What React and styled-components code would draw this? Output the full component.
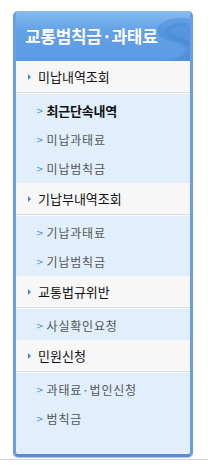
import React from "react";
import styled, { createGlobalStyle } from "styled-components";

const Global = createGlobalStyle`
  html, body { margin: 0; padding: 0; background: #fff; }
  body { font-family: "Noto Sans CJK KR", "Noto Sans", sans-serif; }
`;

const Page = styled.div`
  width: 208px;
  height: 471px;
  padding-top: 11px;
  box-sizing: border-box;
  position: relative;
`;

const Panel = styled.div`
  margin-left: 13px;
  width: 180px;
  box-sizing: border-box;
  border: 3px solid #6a9ee2;
  border-top: none;
  border-bottom: 3px solid #5a8ad6;
  border-radius: 5px;
  background: #e1eefc;
  overflow: hidden;
  box-shadow: 0 1px 1px rgba(60, 100, 170, 0.4);
`;

const Header = styled.div`
  position: relative;
  height: 50px;
  margin: 0 -3px;
  background: linear-gradient(#86bbf0 0%, #62a2e6 40%, #5a9ae2 100%);
  display: flex;
  align-items: center;
  padding: 0 0 2px 12px;
  box-sizing: border-box;
  overflow: hidden;
`;

const Title = styled.h1`
  margin: 0;
  position: relative;
  z-index: 1;
  font-size: 17px;
  font-weight: 700;
  color: #fff;
  letter-spacing: -0.3px;
  text-shadow: 0 0 1px rgba(120, 80, 200, 0.35);
`;

const Swirl = styled.svg`
  position: absolute;
  right: 0;
  top: 4px;
`;

const Category = styled.div`
  height: 31px;
  background: #f7f7f7;
  border-bottom: 1px solid #dcdcdc;
  box-shadow: 0 1px 0 #fafafa;
  margin-bottom: 1px;
  display: flex;
  align-items: center;
  padding-left: 12px;
  font-size: 13px;
  color: #111;
`;

const Bullet = styled.span`
  width: 0;
  height: 0;
  border-left: 3px solid #3f87d8;
  border-top: 3px solid transparent;
  border-bottom: 3px solid transparent;
  margin-right: 7px;
`;

const SubList = styled.ul`
  list-style: none;
  margin: 0;
  padding: 2px 0 ${(p) => (p.$last ? "21px" : "0")};
`;

const SubItem = styled.li`
  height: 29px;
  display: flex;
  align-items: center;
  padding-left: 20px;
  font-size: ${(p) => (p.$active ? "13px" : "12px")};
  font-weight: ${(p) => (p.$active ? 700 : 400)};
  color: ${(p) => (p.$active ? "#111" : "#555")};
  letter-spacing: ${(p) => (p.$active ? "-0.2px" : "0.8px")};
`;

const Chevron = styled.span`
  font-size: 9px;
  color: #4a8fd6;
  margin-right: 3px;
  font-family: "DejaVu Sans", sans-serif;
  font-weight: 400;
  letter-spacing: 0;
`;

const Rule = styled.div`
  position: absolute;
  left: 0;
  right: 0;
  top: 459px;
  height: 1px;
  background: #d4d4d4;
`;

const menu = [
  { title: "미납내역조회", items: ["최근단속내역", "미납과태료", "미납범칙금"], active: 0 },
  { title: "기납부내역조회", items: ["기납과태료", "기납범칙금"] },
  { title: "교통법규위반", items: ["사실확인요청"] },
  { title: "민원신청", items: ["과태료·법인신청", "범칙금"] },
];

export default function App() {
  return (
    <>
      <Global />
      <Page>
        <Panel>
          <Header>
            <Swirl width="50" height="48" viewBox="0 0 50 48">
              <path
                d="M48 4 C30 0 8 8 16 20 C22 28 40 26 42 34 C44 42 28 46 12 46 L50 46 L50 4 Z"
                fill="#3d7fd0"
                opacity="0.35"
              />
              <path
                d="M44 10 C32 8 20 14 26 20 C32 25 46 24 46 32"
                fill="none"
                stroke="#3a78c8"
                strokeWidth="4"
                opacity="0.25"
              />
            </Swirl>
            <Title>교통범칙금·과태료</Title>
          </Header>
          {menu.map((g, gi) => (
            <div key={g.title}>
              <Category>
                <Bullet />
                {g.title}
              </Category>
              <SubList $last={gi === menu.length - 1}>
                {g.items.map((it, i) => (
                  <SubItem key={it} $active={g.active === i}>
                    <Chevron>&gt;</Chevron>
                    {it}
                  </SubItem>
                ))}
              </SubList>
            </div>
          ))}
        </Panel>
        <Rule />
      </Page>
    </>
  );
}
